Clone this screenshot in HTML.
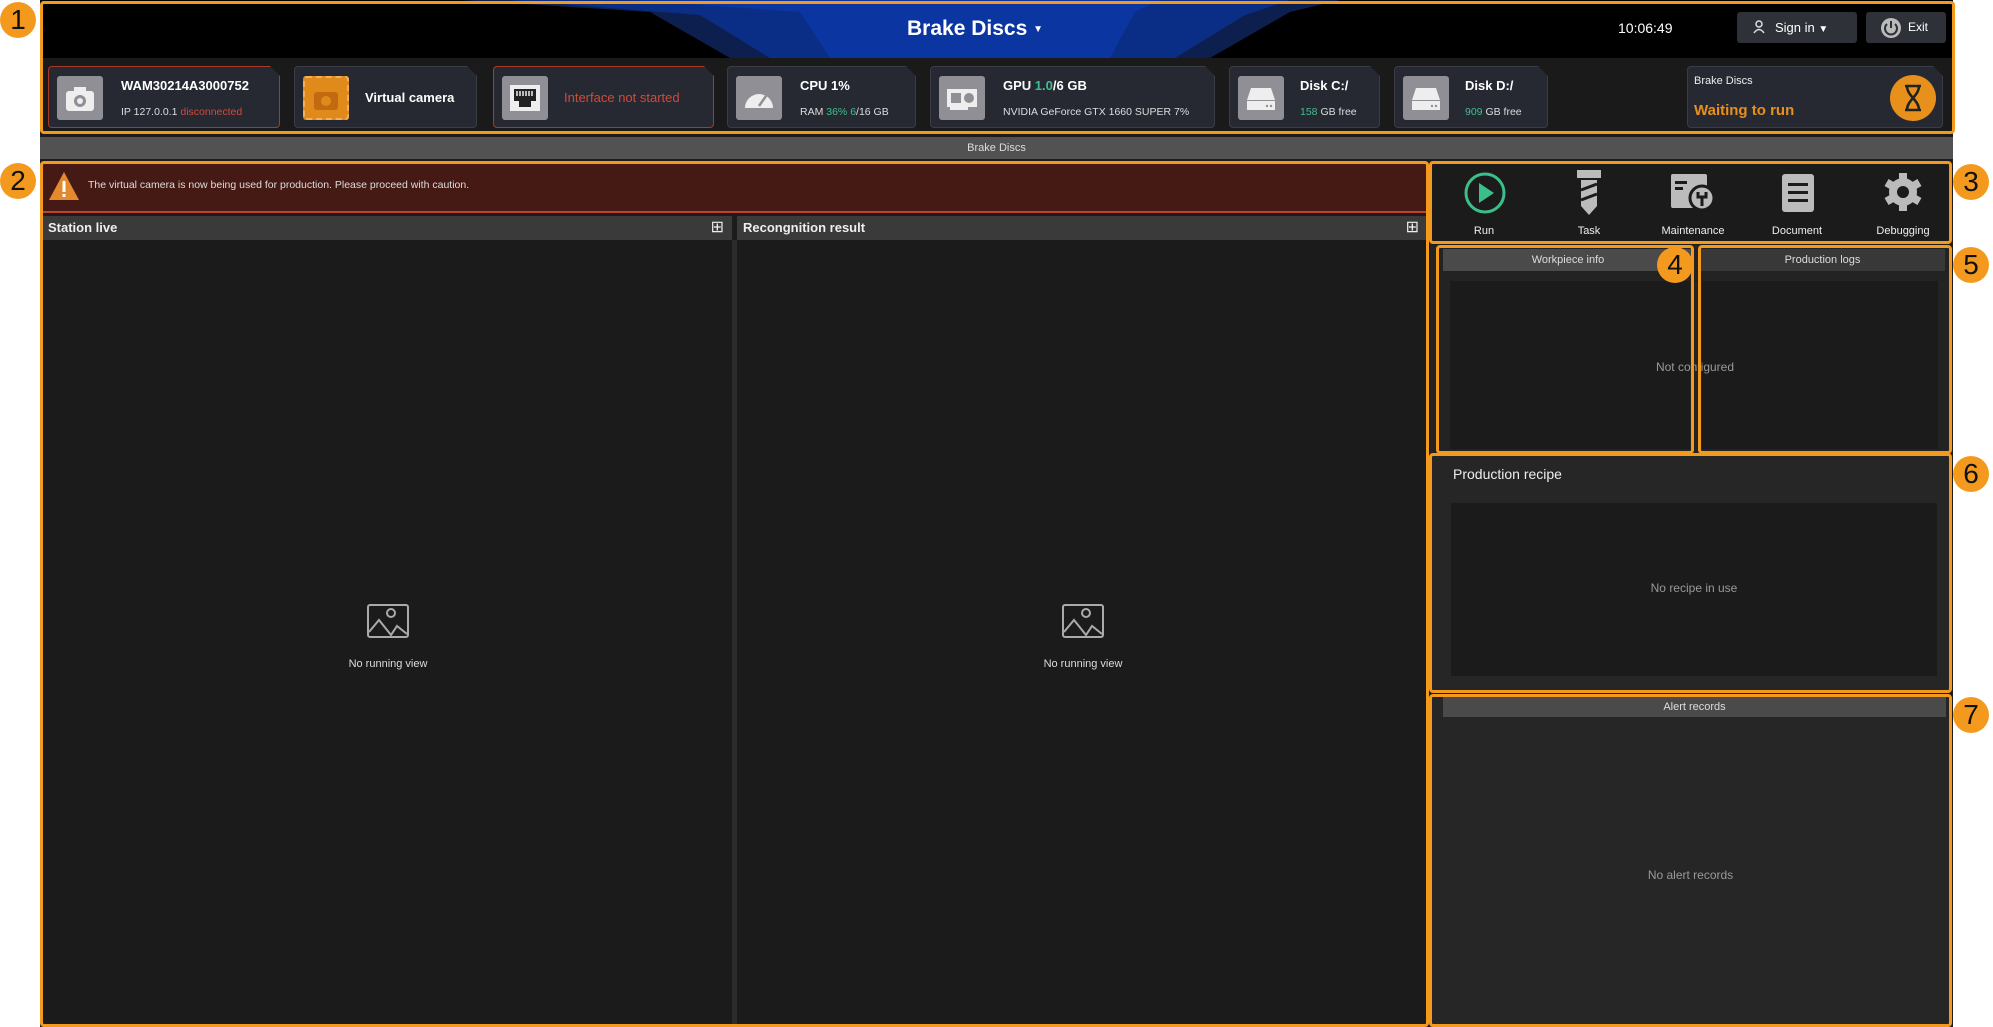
<!DOCTYPE html>
<html><head><meta charset="utf-8"><style>
*{box-sizing:border-box;margin:0;padding:0}
body{width:1993px;height:1027px;background:#fff;position:relative;overflow:hidden;font-family:"Liberation Sans",sans-serif;color:#ddd}
.a{position:absolute}
.ob{position:absolute;border:3px solid #f39a1e;border-radius:4px}
.badge{position:absolute;width:36px;height:36px;border-radius:50%;background:#f39a1e;color:#111;font-size:28px;text-align:center;line-height:36px}
.card{position:absolute;top:66px;height:62px;background:#262932;border:1px solid #3a3d46;border-radius:4px;clip-path:polygon(0 0,calc(100% - 10px) 0,100% 10px,100% 100%,0 100%)}
.card.red{border-color:#a83a2a}
.ic{position:absolute;left:8px;top:9px;width:46px;height:44px;background:#8f8f95;border-radius:3px}
.ic svg{position:absolute;left:7px;top:6px}
.t1{position:absolute;font-size:13px;font-weight:bold;color:#fff}
.t2{position:absolute;font-size:10.5px;color:#ddd}
.g{color:#3fbf8f}.r{color:#d04a3a}
.ph{position:absolute;height:24px;background:#3a3a3a;font-size:13px;font-weight:bold;color:#eee;line-height:24px;padding-left:6px}
.panel{position:absolute;background:#1b1b1b}
.hh{position:absolute;background:#4a4a4a;color:#ddd;font-size:11px;text-align:center;line-height:22px;height:22px}
.lbl{position:absolute;font-size:11px;color:#eee;text-align:center;width:100px}
</style></head><body>
<div class="a" style="left:40px;top:0;width:1913px;height:1027px;background:#1c1c1c"></div>
<div class="a" style="left:40px;top:0;width:1913px;height:58px;background:#000"></div>
<svg class="a" style="left:40px;top:0" width="1913" height="58">
<polygon points="420,0 1300,0 1250,12 1170,58 690,58 610,12" fill="#0d1f4e"/>
<polygon points="470,0 1250,0 1205,15 1135,58 730,58 660,15" fill="#0a2e86"/>
<polygon points="590,0 1120,0 1095,12 1070,58 790,58 760,12" fill="#0b35a0"/>
</svg>
<div class="a" style="left:40px;top:58px;width:1913px;height:76px;background:#1a1a1a"></div>
<div class="a" style="left:907px;top:17px;font-size:21px;font-weight:bold;color:#fff">Brake Discs <span style="font-size:10px;vertical-align:middle">▼</span></div>
<div class="a" style="left:1618px;top:20px;font-size:14px;color:#fff">10:06:49</div>
<div class="a" style="left:1737px;top:12px;width:120px;height:31px;background:#2e3138;border-radius:3px;font-size:13px;color:#fff;line-height:31px;padding-left:16px"><svg width="14" height="14" style="vertical-align:-2px;margin-right:8px"><circle cx="6" cy="4" r="3" fill="none" stroke="#ddd" stroke-width="1.5"/><path d="M1 13 q5 -7 10 0" fill="none" stroke="#ddd" stroke-width="1.5"/></svg>Sign in <span style="font-size:10px">▼</span></div>
<div class="a" style="left:1866px;top:12px;width:80px;height:31px;background:#2e3138;border-radius:3px;font-size:12px;color:#fff;line-height:31px;padding-left:14px"><svg width="22" height="22" style="vertical-align:middle;margin-right:6px"><circle cx="11" cy="11" r="10" fill="#bbb"/><path d="M7 7 a6 6 0 1 0 8 0" fill="none" stroke="#2e3138" stroke-width="2"/><line x1="11" y1="4" x2="11" y2="11" stroke="#2e3138" stroke-width="2"/></svg>Exit</div>

<div class="card red" style="left:48px;width:232px"><div class="ic"><svg width="32" height="32"><rect x="2" y="9" width="28" height="20" rx="3" fill="#eee"/><rect x="10" y="5" width="12" height="6" fill="#eee"/><circle cx="16" cy="19" r="6" fill="#8f8f95"/><circle cx="16" cy="19" r="3" fill="#eee"/></svg></div><div class="t1" style="left:72px;top:11px">WAM30214A3000752</div><div class="t2" style="left:72px;top:39px">IP 127.0.0.1 <span class="r">disconnected</span></div></div>
<div class="card" style="left:294px;width:183px"><div class="ic" style="background:#e08a1c;border:2px dashed #f0b060"><svg width="32" height="32" style="left:5px;top:4px"><rect x="4" y="10" width="24" height="18" rx="3" fill="#c26a10"/><circle cx="16" cy="19" r="5" fill="#e08a1c"/></svg></div><div class="t1" style="left:70px;top:23px">Virtual camera</div></div>
<div class="card red" style="left:493px;width:221px"><div class="ic"><svg width="32" height="32"><rect x="1" y="3" width="30" height="26" fill="#eee"/><rect x="5" y="7" width="22" height="12" fill="#222"/><rect x="10" y="19" width="12" height="6" fill="#222"/><path d="M8 9v5M11 9v5M14 9v5M17 9v5M20 9v5M23 9v5" stroke="#eee" stroke-width="1.5"/></svg></div><div class="a r" style="left:70px;top:23px;font-size:13px">Interface not started</div></div>
<div class="card" style="left:727px;width:189px"><div class="ic"><svg width="32" height="32"><path d="M2 26 a14 14 0 1 1 28 0 z" fill="#eee"/><line x1="16" y1="24" x2="23" y2="14" stroke="#8f8f95" stroke-width="2.5"/></svg></div><div class="t1" style="left:72px;top:11px">CPU 1%</div><div class="t2" style="left:72px;top:39px">RAM <span class="g">36%</span> <span class="g">6</span>/16 GB</div></div>
<div class="card" style="left:930px;width:285px"><div class="ic"><svg width="32" height="32"><rect x="1" y="7" width="30" height="18" fill="#eee"/><rect x="5" y="11" width="10" height="10" fill="#8f8f95"/><circle cx="23" cy="16" r="5" fill="#8f8f95"/><rect x="4" y="25" width="18" height="3" fill="#eee"/></svg></div><div class="t1" style="left:72px;top:11px">GPU <span class="g">1.0</span>/6 GB</div><div class="t2" style="left:72px;top:39px">NVIDIA GeForce GTX 1660 SUPER 7%</div></div>
<div class="card" style="left:1229px;width:151px"><div class="ic"><svg width="32" height="32"><path d="M6 6h20l4 12H2z" fill="#eee"/><rect x="2" y="19" width="28" height="9" fill="#eee"/><circle cx="22" cy="24" r="1.2" fill="#8f8f95"/><circle cx="26" cy="24" r="1.2" fill="#8f8f95"/></svg></div><div class="t1" style="left:70px;top:11px">Disk C:/</div><div class="t2" style="left:70px;top:39px"><span class="g">158</span> GB free</div></div>
<div class="card" style="left:1394px;width:154px"><div class="ic"><svg width="32" height="32"><path d="M6 6h20l4 12H2z" fill="#eee"/><rect x="2" y="19" width="28" height="9" fill="#eee"/><circle cx="22" cy="24" r="1.2" fill="#8f8f95"/><circle cx="26" cy="24" r="1.2" fill="#8f8f95"/></svg></div><div class="t1" style="left:70px;top:11px">Disk D:/</div><div class="t2" style="left:70px;top:39px"><span class="g">909</span> GB free</div></div>
<div class="card" style="left:1687px;width:256px"><div class="a" style="left:6px;top:8px;font-size:11px;color:#eee">Brake Discs</div><div class="a" style="left:6px;top:35px;font-size:15px;font-weight:bold;color:#e8901c">Waiting to run</div><div class="a" style="left:202px;top:8px;width:46px;height:46px;border-radius:50%;background:#e8901c"><svg width="46" height="46"><path d="M15 11h16M15 35h16M17 11c0 10 12 14 12 24M29 11c0 10-12 14-12 24" fill="none" stroke="#222" stroke-width="2.5"/></svg></div></div>

<div class="a" style="left:40px;top:137px;width:1913px;height:22px;background:#525252;font-size:11px;color:#ddd;text-align:center;line-height:22px">Brake Discs</div>

<div class="a" style="left:42px;top:163px;width:1385px;height:50px;background:#451a14;border-bottom:2px solid #c2412c"></div>
<svg class="a" style="left:48px;top:171px" width="32" height="30"><polygon points="16,1 31,29 1,29" fill="#e38a2e"/><rect x="14.5" y="10" width="3" height="11" fill="#fff"/><rect x="14.5" y="23" width="3" height="3" fill="#fff"/></svg>
<div class="a" style="left:88px;top:179px;font-size:10.5px;color:#ddd">The virtual camera is now being used for production. Please proceed with caution.</div>

<div class="panel" style="left:42px;top:216px;width:690px;height:811px"></div>
<div class="ph" style="left:42px;top:216px;width:690px">Station live<span style="position:absolute;right:8px;top:0;font-weight:normal;font-size:16px">⊞</span></div>
<div class="panel" style="left:737px;top:216px;width:690px;height:811px"></div>
<div class="ph" style="left:737px;top:216px;width:690px">Recongnition result<span style="position:absolute;right:8px;top:0;font-weight:normal;font-size:16px">⊞</span></div>
<div class="a" style="left:732px;top:240px;width:5px;height:787px;background:#2c2c2c"></div>
<svg class="a" style="left:367px;top:604px" width="42" height="34"><rect x="1" y="1" width="40" height="32" rx="2" fill="none" stroke="#aaa" stroke-width="2"/><circle cx="24" cy="9" r="4" fill="none" stroke="#aaa" stroke-width="2"/><polyline points="2,28 12,16 24,31 30,22 40,30" fill="none" stroke="#aaa" stroke-width="2"/></svg>
<div class="a" style="left:338px;top:658px;width:100px;text-align:center;font-size:11px;color:#ddd">No running view</div>
<svg class="a" style="left:1062px;top:604px" width="42" height="34"><rect x="1" y="1" width="40" height="32" rx="2" fill="none" stroke="#aaa" stroke-width="2"/><circle cx="24" cy="9" r="4" fill="none" stroke="#aaa" stroke-width="2"/><polyline points="2,28 12,16 24,31 30,22 40,30" fill="none" stroke="#aaa" stroke-width="2"/></svg>
<div class="a" style="left:1033px;top:658px;width:100px;text-align:center;font-size:11px;color:#ddd">No running view</div>

<div class="a" style="left:1430px;top:163px;width:521px;height:79px;background:#1b1b1b"></div>
<svg class="a" style="left:1463px;top:171px" width="44" height="44"><circle cx="22" cy="22" r="19" fill="none" stroke="#3bbf8a" stroke-width="3"/><polygon points="16,12 31,22 16,32" fill="#3bbf8a"/></svg>
<svg class="a" style="left:1575px;top:170px" width="28" height="46"><rect x="2" y="0" width="24" height="8" fill="#bbb"/><polygon points="6,10 22,10 22,36 14,45 6,36" fill="#bbb"/><line x1="6" y1="20" x2="22" y2="14" stroke="#1b1b1b" stroke-width="3"/><line x1="6" y1="30" x2="22" y2="24" stroke="#1b1b1b" stroke-width="3"/></svg>
<svg class="a" style="left:1671px;top:174px" width="46" height="40"><rect x="0" y="0" width="36" height="34" rx="2" fill="#bbb"/><rect x="4" y="7" width="12" height="3" fill="#1b1b1b"/><rect x="4" y="13" width="8" height="3" fill="#1b1b1b"/><circle cx="31" cy="24" r="12" fill="#bbb" stroke="#1b1b1b" stroke-width="3"/><path d="M27 18 v5 h8 v-5 M31 23 v9" stroke="#1b1b1b" stroke-width="3" fill="none"/></svg>
<svg class="a" style="left:1782px;top:174px" width="32" height="38"><rect x="0" y="0" width="32" height="38" rx="3" fill="#bbb"/><rect x="6" y="9" width="20" height="3" fill="#1b1b1b"/><rect x="6" y="17" width="20" height="3" fill="#1b1b1b"/><rect x="6" y="25" width="20" height="3" fill="#1b1b1b"/></svg>
<svg class="a" style="left:1883px;top:172px" width="40" height="40" viewBox="0 0 40 40"><g fill="#bbb"><circle cx="20" cy="20" r="14"/><rect x="16" y="1" width="8" height="38"/><rect x="16" y="1" width="8" height="38" transform="rotate(60 20 20)"/><rect x="16" y="1" width="8" height="38" transform="rotate(120 20 20)"/></g><circle cx="20" cy="20" r="6" fill="#1b1b1b"/></svg>
<div class="lbl" style="left:1434px;top:225px">Run</div>
<div class="lbl" style="left:1539px;top:225px">Task</div>
<div class="lbl" style="left:1643px;top:225px">Maintenance</div>
<div class="lbl" style="left:1747px;top:225px">Document</div>
<div class="lbl" style="left:1853px;top:225px">Debugging</div>

<div class="a" style="left:1430px;top:245px;width:521px;height:208px;background:#232323"></div>
<div class="hh" style="left:1443px;top:249px;width:250px">Workpiece info</div>
<div class="hh" style="left:1700px;top:249px;width:245px;background:#383838">Production logs</div>
<div class="a" style="left:1450px;top:281px;width:240px;height:168px;background:#1b1b1b"></div>
<div class="a" style="left:1702px;top:281px;width:236px;height:168px;background:#1b1b1b"></div>
<div class="a" style="left:1640px;top:360px;width:110px;text-align:center;font-size:12px;color:#999">Not configured</div>

<div class="a" style="left:1430px;top:455px;width:521px;height:236px;background:#262626"></div>
<div class="a" style="left:1453px;top:466px;font-size:14px;color:#eee">Production recipe</div>
<div class="a" style="left:1451px;top:503px;width:486px;height:173px;background:#1b1b1b"></div>
<div class="a" style="left:1451px;top:581px;width:486px;text-align:center;font-size:12px;color:#999">No recipe in use</div>

<div class="a" style="left:1430px;top:695px;width:521px;height:332px;background:#262626"></div>
<div class="hh" style="left:1443px;top:697px;width:503px;height:20px;line-height:20px">Alert records</div>
<div class="a" style="left:1430px;top:868px;width:521px;text-align:center;font-size:12px;color:#999">No alert records</div>

<div class="ob" style="left:40px;top:1px;width:1915px;height:133px"></div>
<div class="ob" style="left:40px;top:161px;width:1389px;height:866px"></div>
<div class="ob" style="left:1429px;top:161px;width:523px;height:83px"></div>
<div class="ob" style="left:1436px;top:245px;width:258px;height:209px"></div>
<div class="ob" style="left:1698px;top:245px;width:254px;height:209px"></div>
<div class="ob" style="left:1429px;top:453px;width:523px;height:240px"></div>
<div class="ob" style="left:1429px;top:694px;width:523px;height:333px"></div>

<div class="badge" style="left:0px;top:2px">1</div>
<div class="badge" style="left:0px;top:163px">2</div>
<div class="badge" style="left:1953px;top:164px">3</div>
<div class="badge" style="left:1657px;top:247px">4</div>
<div class="badge" style="left:1953px;top:247px">5</div>
<div class="badge" style="left:1953px;top:456px">6</div>
<div class="badge" style="left:1953px;top:697px">7</div>
</body></html>
